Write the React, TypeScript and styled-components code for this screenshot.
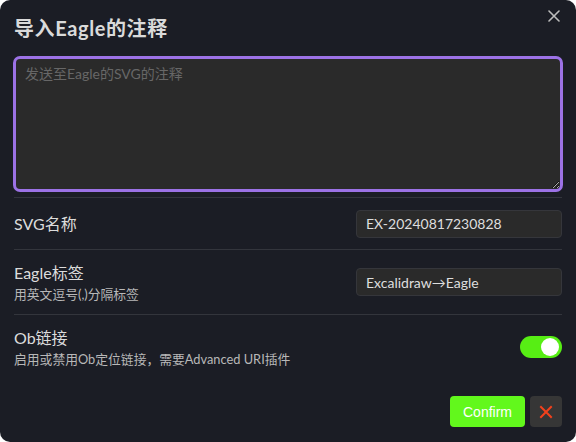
import React, { useState } from "react";
import styled, { createGlobalStyle } from "styled-components";

const Global = createGlobalStyle`
  html, body { margin: 0; padding: 0; background: #ffffff; }
  * { box-sizing: border-box; }
`;

const FONT = `Lato, "Noto Sans CJK SC", sans-serif`;

const Modal = styled.div`
  position: relative;
  width: 576px;
  height: 442px;
  background: #1b1d25;
  border-radius: 10px;
  padding: 14px 14px 15px 14px;
  display: flex;
  flex-direction: column;
  font-family: ${FONT};
  color: #dcdcdc;
  overflow: hidden;
`;

const Title = styled.h1`
  margin: 0;
  font-size: 20px;
  font-weight: 700;
  line-height: 28px;
  height: 28px;
  letter-spacing: 0.6px;
  color: #dadada;
`;

const CloseBtn = styled.button`
  position: absolute;
  top: 6px;
  right: 12px;
  width: 20px;
  height: 20px;
  padding: 0;
  border: none;
  background: transparent;
  display: flex;
  align-items: center;
  justify-content: center;
  cursor: pointer;
`;

const TextArea = styled.textarea`
  display: block;
  margin: 14px -1px 0 -1px;
  width: calc(100% + 2px);
  height: 136px;
  background: #2a2a2a;
  border: 3px solid #9c72e6;
  border-radius: 7px;
  outline: none;
  resize: vertical;
  padding: 5px 9px;
  font-family: ${FONT};
  font-size: 14px;
  line-height: 20px;
  color: #ddd;
  &::placeholder { color: #676767; }
`;

const Divider = styled.div`
  height: 1px;
  background: #33353c;
  margin-top: 5px;
`;

const Row = styled.div<{ $h: number; $last?: boolean }>`
  display: flex;
  align-items: center;
  justify-content: space-between;
  height: ${(p) => p.$h}px;
  border-bottom: ${(p) => (p.$last ? "none" : "1px solid #33353c")};
`;

const Info = styled.div`
  display: flex;
  flex-direction: column;
`;

const Label = styled.div`
  font-size: 16px;
  line-height: 22px;
  color: #dcdcdc;
`;

const Desc = styled.div`
  font-size: 12.8px;
  line-height: 18px;
  margin-top: 1px;
  color: #b8b8b8;
`;

const Input = styled.input`
  width: 206px;
  height: 28px;
  background: #2a2a2a;
  border: 1px solid #35363b;
  border-radius: 4px;
  padding: 0 9px;
  font-family: ${FONT};
  font-size: 14px;
  color: #dedede;
  outline: none;
`;

const Toggle = styled.div<{ $on: boolean }>`
  position: relative;
  width: 42px;
  height: 22px;
  border-radius: 11px;
  background: ${(p) => (p.$on ? "#57ee14" : "#555")};
  cursor: pointer;
  &::after {
    content: "";
    position: absolute;
    top: 2px;
    left: ${(p) => (p.$on ? "21px" : "2px")};
    width: 18px;
    height: 18px;
    border-radius: 50%;
    background: #ffffff;
  }
`;

const Footer = styled.div`
  margin-top: auto;
  display: flex;
  justify-content: flex-end;
  align-items: center;
  gap: 5px;
`;

const ConfirmBtn = styled.button`
  height: 31px;
  padding: 0 13px;
  border: none;
  border-radius: 4px;
  background: #62f81c;
  color: #ffffff;
  font-family: "Liberation Sans", Arial, sans-serif;
  font-size: 14px;
  cursor: pointer;
`;

const CancelBtn = styled.button`
  width: 32px;
  height: 31px;
  border: none;
  border-radius: 4px;
  background: #363636;
  display: flex;
  align-items: center;
  justify-content: center;
  padding: 0;
  cursor: pointer;
`;

export default function App() {
  const [on, setOn] = useState(true);
  return (
    <>
      <Global />
      <Modal>
        <Title>导入Eagle的注释</Title>
        <CloseBtn aria-label="close">
          <svg width="12" height="12" viewBox="0 0 12 12">
            <path d="M1 1L11 11M11 1L1 11" stroke="#bdbdbd" strokeWidth="1.6" strokeLinecap="round" />
          </svg>
        </CloseBtn>
        <TextArea placeholder="发送至Eagle的SVG的注释" />
        <Divider />
        <Row $h={52}>
          <Info>
            <Label>SVG名称</Label>
          </Info>
          <Input defaultValue="EX-20240817230828" />
        </Row>
        <Row $h={65}>
          <Info>
            <Label>Eagle标签</Label>
            <Desc>用英文逗号(,)分隔标签</Desc>
          </Info>
          <Input defaultValue="Excalidraw→Eagle" />
        </Row>
        <Row $h={64} $last>
          <Info>
            <Label>Ob链接</Label>
            <Desc>启用或禁用Ob定位链接，需要Advanced URI插件</Desc>
          </Info>
          <Toggle $on={on} onClick={() => setOn(!on)} />
        </Row>
        <Footer>
          <ConfirmBtn>Confirm</ConfirmBtn>
          <CancelBtn aria-label="cancel">
            <svg width="14" height="14" viewBox="0 0 14 14">
              <path d="M2 2L12 12M12 2L2 12" stroke="#f2411c" strokeWidth="2" strokeLinecap="square" />
            </svg>
          </CancelBtn>
        </Footer>
      </Modal>
    </>
  );
}
